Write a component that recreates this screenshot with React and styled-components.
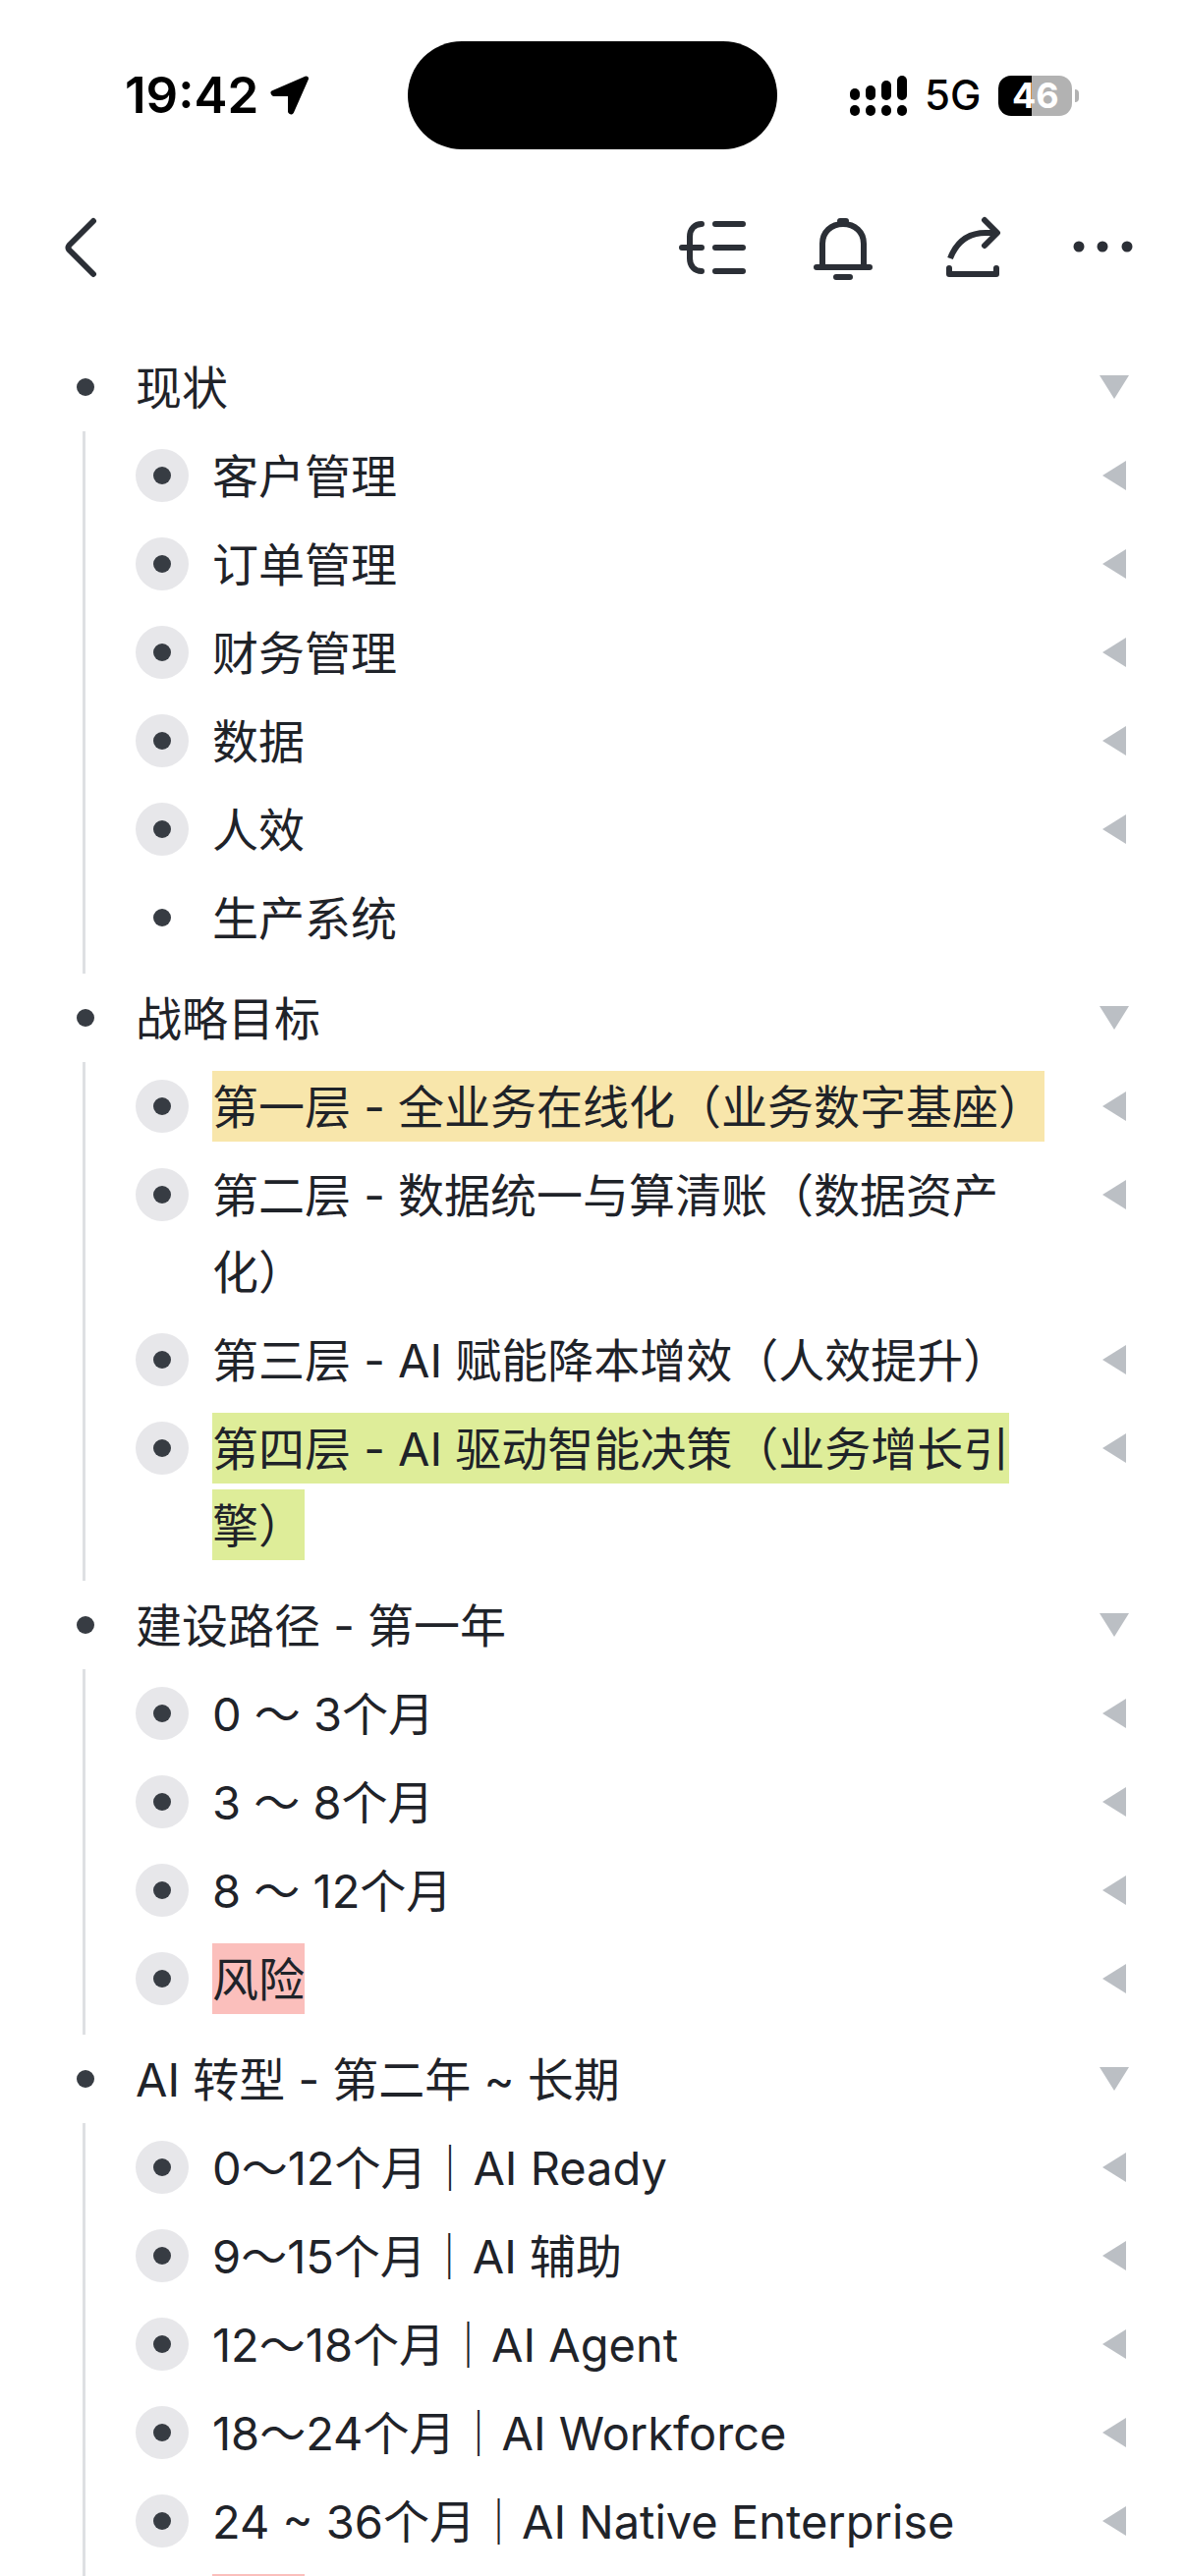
import React, { useState } from 'react'
import styled, { createGlobalStyle } from 'styled-components'

const GlobalStyle = createGlobalStyle`
  * {
    box-sizing: border-box;
  }

  body {
    margin: 0;
    background: #ffffff;
    color: #1f2329;
    font-family: Inter, 'Noto Sans CJK SC', sans-serif;
  }

  button {
    padding: 0;
    border: 0;
    background: none;
    color: inherit;
    font: inherit;
    cursor: pointer;
  }
`

const Screen = styled.div`
  display: flex;
  flex-direction: column;
  height: 100vh;
`

/* status bar */

const StatusBar = styled.header`
  display: grid;
  grid-template-columns: 1fr 376px 1fr;
  align-items: center;
  flex: none;
  height: 194px;
  color: #000000;
`

const StatusLeft = styled.div`
  display: flex;
  align-items: center;
  gap: 12px;
  padding-left: 127px;
`

const StatusRight = styled.div`
  display: flex;
  align-items: center;
  gap: 18px;
  padding-left: 74px;
`

const Island = styled.div`
  height: 110px;
  border-radius: 55px;
  background: #000000;
`

const Time = styled.time`
  font-size: 51px;
  font-weight: 600;
  line-height: 60px;
`

const Network = styled.span`
  font-size: 42px;
  font-weight: 500;
  line-height: 60px;
`

const Battery = styled.div`
  display: flex;
  align-items: center;
  gap: 3px;
`

const BatteryBody = styled.div`
  width: 75px;
  height: 41px;
  border-radius: 13px;
  background: linear-gradient(to right, #000000 46%, #b2b2b2 46%);
  color: #ffffff;
  font-size: 36px;
  font-weight: 700;
  line-height: 41px;
  text-align: center;
`

const BatteryTip = styled.div`
  width: 4px;
  height: 13px;
  border-radius: 0 4px 4px 0;
  background: #b2b2b2;
`

/* top navigation */

const NavBar = styled.nav`
  display: flex;
  align-items: center;
  justify-content: space-between;
  flex: none;
  height: 116px;
  padding: 0 46px;
`

const NavActions = styled.div`
  display: flex;
  gap: 61px;
`

const IconButton = styled.button`
  width: 72px;
  height: 72px;
  color: #2b2f36;

  svg {
    display: block;
    fill: none;
    stroke: currentColor;
    stroke-width: 6;
    stroke-linecap: round;
    stroke-linejoin: round;
  }
`

/* outline */

const Outline = styled.main`
  flex: 1;
  min-height: 0;
  padding: 39px 57px 0 78px;
  overflow-y: auto;
  scrollbar-width: none;
`

const List = styled.ul`
  margin: 0;
  padding: 0;
  list-style: none;
`

const Children = styled(List)`
  margin-left: 6px;
  padding: 0 0 12px 51px;
  border-left: 3px solid #dee0e3;
`

const Row = styled.div`
  display: flex;
  align-items: flex-start;
  gap: ${(props) => (props.$nested ? '24px' : '42px')};
  padding: 6px 0;
`

const Bullet = styled.span`
  display: flex;
  align-items: center;
  justify-content: center;
  flex: none;
  width: ${(props) => (props.$nested ? '54px' : '18px')};
  height: 54px;
  margin: 12px 0;
  border-radius: 50%;
  background: ${(props) => (props.$halo ? '#e7e7ea' : 'transparent')};

  &::after {
    content: '';
    width: 18px;
    height: 18px;
    border-radius: 50%;
    background: #373c43;
  }
`

const Label = styled.div`
  flex: 1;
  margin: 1px 0 -1px;
  font-size: 47px;
  line-height: 78px;
  text-spacing-trim: space-all;
`

const Mark = styled.mark`
  padding: 8px 0 7px;
  background: ${(props) => props.$color};
  color: inherit;
  box-decoration-break: clone;
  -webkit-box-decoration-break: clone;
`

const Toggle = styled.button`
  display: flex;
  align-items: center;
  justify-content: center;
  flex: none;
  width: 30px;
  height: 78px;
  color: #bbbfc4;

  svg {
    display: block;
    fill: currentColor;
  }
`

const YELLOW = '#f8e6ab'
const GREEN = '#deed99'
const RED = '#fbbfbc'

const sections = [
  {
    text: '现状',
    items: [
      { text: '客户管理' },
      { text: '订单管理' },
      { text: '财务管理' },
      { text: '数据' },
      { text: '人效' },
      { text: '生产系统', leaf: true },
    ],
  },
  {
    text: '战略目标',
    items: [
      { text: '第一层 - 全业务在线化（业务数字基座）', color: YELLOW },
      { text: '第二层 - 数据统一与算清账（数据资产化）' },
      { text: '第三层 - AI 赋能降本增效（人效提升）' },
      { text: '第四层 - AI 驱动智能决策（业务增长引擎）', color: GREEN },
    ],
  },
  {
    text: '建设路径 - 第一年',
    items: [
      { text: '0 ～ 3个月' },
      { text: '3 ～ 8个月' },
      { text: '8 ～ 12个月' },
      { text: '风险', color: RED },
    ],
  },
  {
    text: 'AI 转型 - 第二年 ~ 长期',
    items: [
      { text: '0～12个月｜AI Ready' },
      { text: '9～15个月｜AI 辅助' },
      { text: '12～18个月｜AI Agent' },
      { text: '18～24个月｜AI Workforce' },
      { text: '24 ~ 36个月｜AI Native Enterprise' },
      { text: '风险', color: RED },
    ],
  },
]

function LocationIcon() {
  return (
    <svg width="40" height="40" viewBox="0 0 40 40" fill="currentColor" stroke="currentColor" strokeWidth="5" strokeLinejoin="round">
      <path d="M36.5 3 3 17.5 3.5 18.5H20.5V36.5L21.5 37Z" />
    </svg>
  )
}

function SignalIcon() {
  const tops = [13, 10, 5, 0]
  return (
    <svg width="58" height="41" viewBox="0 0 58 41" fill="currentColor">
      {tops.map((top, i) => (
        <React.Fragment key={top}>
          <rect x={i * 16} y={top} width="10" height={25 - top} rx="5" />
          <rect x={i * 16} y="30" width="10" height="11" rx="5" />
        </React.Fragment>
      ))}
    </svg>
  )
}

function NavIcon({ children }) {
  return (
    <svg width="72" height="72" viewBox="0 0 72 72">
      {children}
    </svg>
  )
}

function Arrow({ open }) {
  return open ? (
    <svg width="30" height="24" viewBox="0 0 30 24">
      <path d="M0 0H30L15 24Z" />
    </svg>
  ) : (
    <svg width="24" height="30" viewBox="0 0 24 30">
      <path d="M24 0V30L0 15Z" />
    </svg>
  )
}

function Item({ item }) {
  return (
    <li>
      <Row $nested>
        <Bullet $nested $halo={!item.leaf} />
        <Label>{item.color ? <Mark $color={item.color}>{item.text}</Mark> : item.text}</Label>
        {!item.leaf && (
          <Toggle aria-label="展开" aria-expanded="false">
            <Arrow />
          </Toggle>
        )}
      </Row>
    </li>
  )
}

function Section({ section }) {
  const [open, setOpen] = useState(true)

  return (
    <li>
      <Row>
        <Bullet />
        <Label>{section.text}</Label>
        <Toggle aria-label="折叠" aria-expanded={open} onClick={() => setOpen(!open)}>
          <Arrow open={open} />
        </Toggle>
      </Row>
      {open && (
        <Children>
          {section.items.map((item) => (
            <Item key={item.text} item={item} />
          ))}
        </Children>
      )}
    </li>
  )
}

function App() {
  return (
    <Screen>
      <GlobalStyle />
      <StatusBar>
        <StatusLeft>
          <Time>19:42</Time>
          <LocationIcon />
        </StatusLeft>
        <Island />
        <StatusRight>
          <SignalIcon />
          <Network>5G</Network>
          <Battery>
            <BatteryBody>46</BatteryBody>
            <BatteryTip />
          </Battery>
        </StatusRight>
      </StatusBar>

      <NavBar>
        <IconButton aria-label="返回">
          <NavIcon>
            <path d="M49 9 24.5 33.5Q22.5 36 24.5 38.5L49 63" />
          </NavIcon>
        </IconButton>
        <NavActions>
          <IconButton aria-label="大纲">
            <NavIcon>
              <path d="M25 12C18 12 13 17 13 25V47C13 55 18 60 25 60" />
              <path d="M5 36H25M39 12H67M39 36H67M39 60H67" />
            </NavIcon>
          </IconButton>
          <IconButton aria-label="通知">
            <NavIcon>
              <path d="M15 55V32C15 20 24 12 36 12S57 20 57 32V55" />
              <path d="M9 56H63M29 66H43M33 9H39" />
            </NavIcon>
          </IconButton>
          <IconButton aria-label="分享">
            <NavIcon>
              <path d="M12 47C19 29 31 21 48 21H59" strokeLinecap="butt" />
              <path d="M47 8 60 21 47 34M11 57V63H59V57" />
            </NavIcon>
          </IconButton>
          <IconButton aria-label="更多">
            <NavIcon>
              <g fill="currentColor" stroke="none">
                <circle cx="10" cy="35" r="5.5" />
                <circle cx="34" cy="35" r="5.5" />
                <circle cx="59" cy="35" r="5.5" />
              </g>
            </NavIcon>
          </IconButton>
        </NavActions>
      </NavBar>

      <Outline>
        <List>
          {sections.map((section) => (
            <Section key={section.text} section={section} />
          ))}
        </List>
      </Outline>
    </Screen>
  )
}

export default App
